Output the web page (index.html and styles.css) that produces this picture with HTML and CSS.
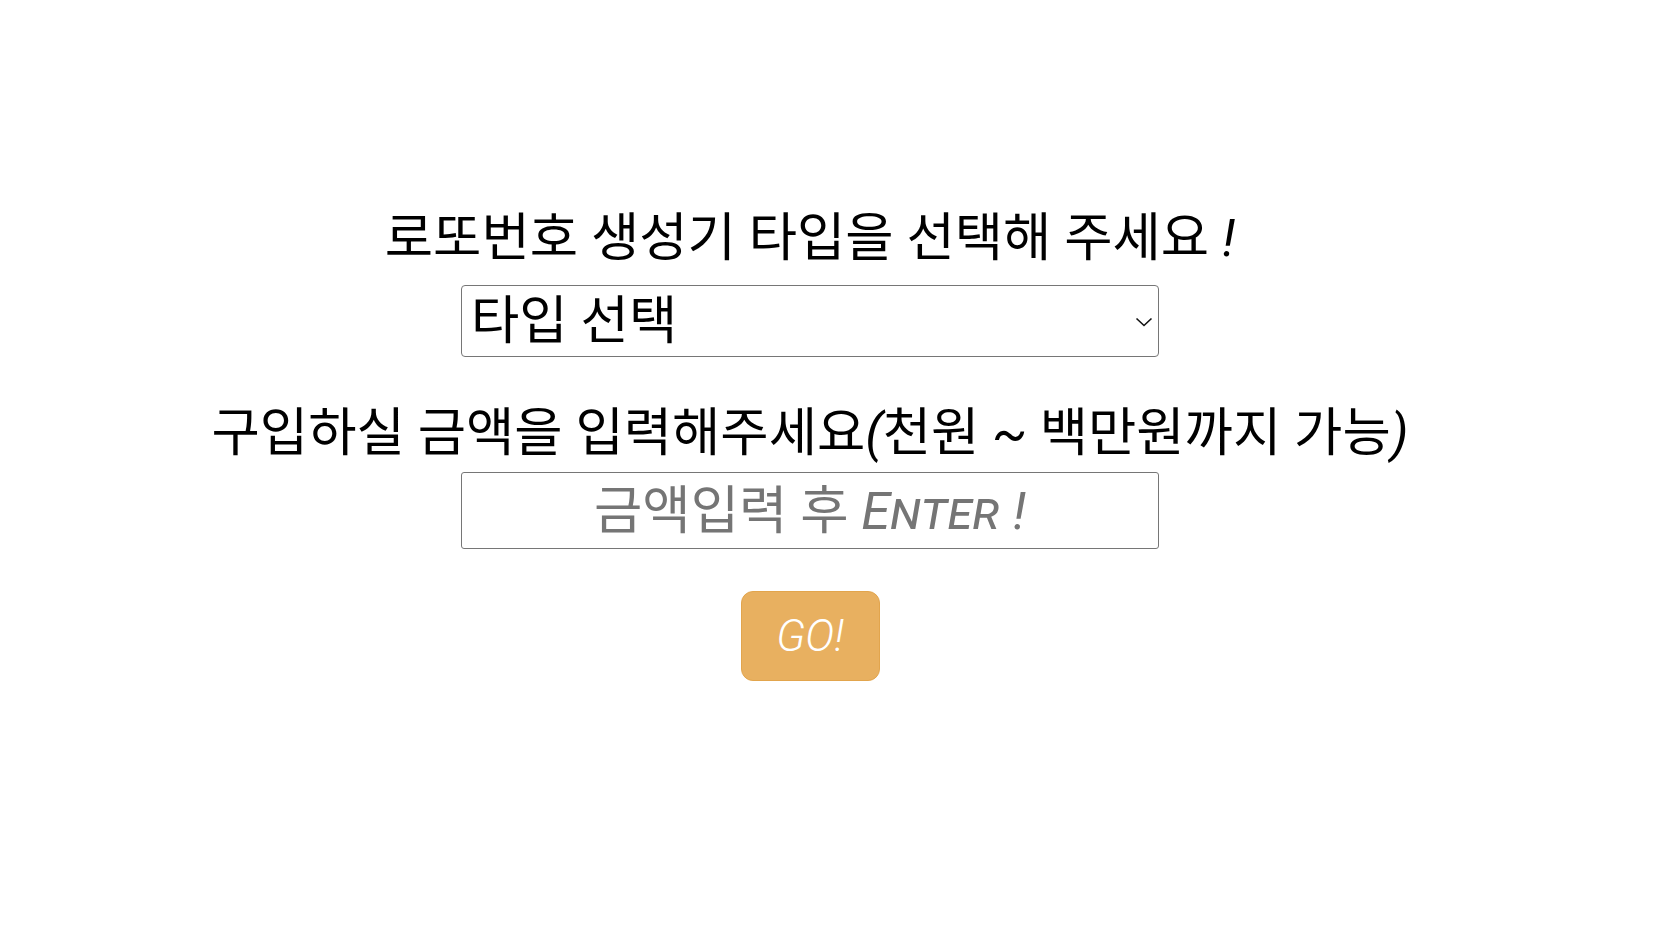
FILE: index.html
```html
<!DOCTYPE html>
<html lang="ko">
<head>
  <meta charset="UTF-8">
  <title>로또번호 생성기</title>
  <link rel="stylesheet" href="styles.css">
</head>
<body>
  <div class="container">
    <h2 class="title">로또번호 생성기 타입을 선택해 주세요 !</h2>
    <div class="select-wrap">
      <select id="lottoType" class="type-select">
        <option value="">타입 선택</option>
        <option value="random">완전 랜덤</option>
        <option value="frequent">많이 나온 번호</option>
        <option value="rare">적게 나온 번호</option>
      </select>
      <svg class="select-arrow" width="18" height="10" viewBox="0 0 18 10">
        <path d="M1.5 1.5 L9 8.5 L16.5 1.5" fill="none" stroke="#111" stroke-width="1.6"/>
      </svg>
    </div>

    <h2 class="title amount-title">구입하실 금액을 입력해주세요(천원 ~ 백만원까지 가능)</h2>
    <input type="text" id="amount" class="amount-input" placeholder="금액입력 후 Enter !">

    <button type="button" id="goBtn" class="go-btn">GO!</button>
  </div>
</body>
</html>
```

FILE: styles.css
```css
body {
  margin: 0;
  background: #fff;
  font-family: Roboto, "Noto Sans CJK KR", sans-serif;
  color: #000;
}
.container {
  display: flex;
  flex-direction: column;
  align-items: center;
  padding: 212px 44px 0 0;
}
.title {
  margin: 0;
  font-size: 52.5px;
  line-height: 52px;
  font-weight: 400;
  font-style: italic;
  font-synthesis: none;
}
.select-wrap {
  position: relative;
  margin-top: 21px;
}
.type-select {
  display: block;
  box-sizing: border-box;
  width: 698px;
  height: 72px;
  padding: 0 0 0 9px;
  border: 1px solid #767676;
  border-radius: 4px;
  background: #fff;
  color: #000;
  font-family: inherit;
  font-size: 52.5px;
  appearance: none;
  -webkit-appearance: none;
  outline: none;
}
.select-arrow {
  position: absolute;
  right: 6px;
  top: 32px;
  pointer-events: none;
}
.amount-title {
  margin-top: 50px;
}
.amount-input {
  box-sizing: border-box;
  width: 698px;
  height: 77px;
  margin-top: 13px;
  border: 1px solid #767676;
  border-radius: 3px;
  text-align: center;
  font-family: inherit;
  font-size: 52.5px;
}
.amount-input::placeholder {
  color: #757575;
  font-style: italic;
  font-variant: small-caps;
  font-synthesis: none;
}
.go-btn {
  width: 139px;
  height: 90px;
  margin-top: 42px;
  background: #e8b060;
  border: 1px solid #e2a54d;
  border-radius: 12px;
  color: #fff;
  font-family: inherit;
  font-size: 44px;
  font-weight: 300;
  font-style: italic;
  cursor: pointer;
}
.go-btn:hover {
  background: #e0a44f;
}
```
